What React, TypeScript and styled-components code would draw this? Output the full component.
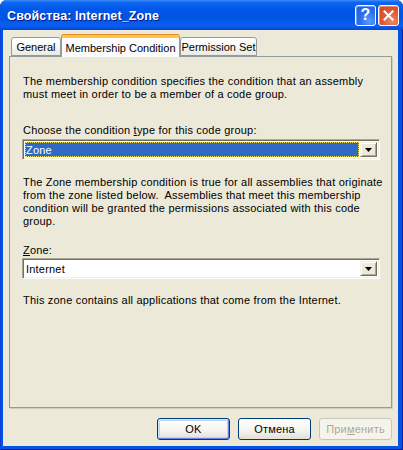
import React from "react";
import styled, { createGlobalStyle } from "styled-components";

const Global = createGlobalStyle`
  html, body { margin: 0; padding: 0; background: #ffffff; }
  body { font-family: "Liberation Sans", Arial, sans-serif; font-size: 11px; color: #000; letter-spacing: 0.2px; }
  * { box-sizing: border-box; }
`;

const Window = styled.div`
  width: 403px;
  height: 450px;
  display: flex;
  flex-direction: column;
  border-radius: 7px 7px 0 0;
  overflow: hidden;
  background: #0055e5;
  box-shadow: inset 1px 0 0 #0a3fd8, inset -1px 0 0 #001ea0, inset 0 -1px 0 #001ea0;
`;

const TitleBar = styled.div`
  height: 30px;
  flex: none;
  display: flex;
  align-items: center;
  padding: 0 4px 0 7px;
  background: linear-gradient(180deg, #3d8ef7 0%, #0f66ef 8%, #0058ea 30%, #0054e3 60%, #0a5ff1 86%, #0048d4 100%);
`;

const Title = styled.div`
  flex: 1;
  color: #fff;
  font-weight: bold;
  font-size: 12.5px;
  letter-spacing: 0.1px;
  text-shadow: 1px 1px 0 #0a1883;
  padding-top: 1px;
`;

const CaptionButton = styled.div<{ $kind: "help" | "close" }>`
  width: 21px;
  height: 21px;
  margin-left: 2px;
  border: 1px solid #fff;
  border-radius: 3px;
  display: flex;
  align-items: center;
  justify-content: center;
  color: #fff;
  font-weight: bold;
  font-size: 16px;
  background: ${(p) =>
    p.$kind === "help"
      ? "radial-gradient(circle at 70% 80%, #5a9cff 0%, #2e6ff0 45%, #1c58e0 100%)"
      : "radial-gradient(circle at 70% 80%, #f18a63 0%, #e25b34 45%, #c8431e 100%)"};
  box-shadow: inset 1px 1px 0 rgba(255, 255, 255, 0.35);
`;

const Client = styled.div`
  flex: 1;
  margin: 0 5px 4px 3px;
  background: #ece9d8;
  display: flex;
  flex-direction: column;
  padding: 5px 6px 6px 6px;
`;

const TabStrip = styled.div`
  height: 21px;
  display: flex;
  align-items: flex-end;
  padding-left: 2px;
`;

const Tab = styled.div<{ $w: number; $active?: boolean }>`
  position: relative;
  z-index: ${(p) => (p.$active ? 2 : 1)};
  width: ${(p) => p.$w}px;
  height: ${(p) => (p.$active ? 22 : 19)}px;
  margin-bottom: ${(p) => (p.$active ? -1 : 0)}px;
  border: 1px solid #919b9c;
  border-bottom: ${(p) => (p.$active ? "none" : "1px solid #919b9c")};
  border-top: ${(p) => (p.$active ? "3px solid #ffc83c" : "1px solid #919b9c")};
  border-radius: 3px 3px 0 0;
  background: ${(p) =>
    p.$active ? "#fcfcfe" : "linear-gradient(180deg, #ffffff 0%, #f7f7f3 50%, #ebeae3 100%)"};
  box-shadow: ${(p) => (p.$active ? "0 -1px 0 #e68b2c" : "none")};
  display: flex;
  align-items: center;
  justify-content: center;
  padding-top: ${(p) => (p.$active ? 0 : 1)}px;
  white-space: nowrap;
  letter-spacing: 0;
`;

const Panel = styled.div`
  height: 352px;
  border: 1px solid #919b9c;
  box-shadow: 1px 1px 0 #d0cdbd;
  background: #ece9d8;
  padding: 18px 11px 0 13px;
  display: flex;
  flex-direction: column;
`;

const Para = styled.div<{ $mt?: number }>`
  line-height: 13px;
  margin-top: ${(p) => p.$mt ?? 0}px;
  white-space: nowrap;
`;

const Combo = styled.div<{ $mt: number }>`
  margin-top: ${(p) => p.$mt}px;
  margin-left: -1px;
  height: 21px;
  display: flex;
  align-items: stretch;
  padding: 2px;
  background: #fff;
  border: 1px solid;
  border-color: #aca899 #ffffff #ffffff #aca899;
  box-shadow: inset 1px 1px 0 #716f64, inset -1px -1px 0 #f1efe2;
`;

const Field = styled.div<{ $selected?: boolean }>`
  flex: 1;
  display: flex;
  align-items: center;
  padding-left: 1px;
  margin-right: 1px;
  background: ${(p) => (p.$selected ? "#316ac5" : "transparent")};
  color: ${(p) => (p.$selected ? "#fff" : "#000")};
  outline: ${(p) => (p.$selected ? "1px dotted #f0e060" : "none")};
  outline-offset: -1px;
`;

const DropButton = styled.div`
  width: 17px;
  flex: none;
  background: #ece9d8;
  border: 1px solid;
  border-color: #f1efe2 #716f64 #716f64 #f1efe2;
  box-shadow: inset 1px 1px 0 #ffffff, inset -1px -1px 0 #aca899;
  display: flex;
  align-items: center;
  justify-content: center;
`;

const Arrow = () => (
  <svg width="7" height="4" viewBox="0 0 7 4">
    <path d="M0 0H7L3.5 4Z" fill="#000" />
  </svg>
);

const ButtonRow = styled.div`
  margin-top: 10px;
  display: flex;
  justify-content: flex-end;
  gap: 8px;
`;

const Button = styled.div<{ $default?: boolean; $disabled?: boolean }>`
  width: 73px;
  height: 22px;
  border-radius: 3px;
  border: 1px solid ${(p) => (p.$disabled ? "#c9c7ba" : "#003c74")};
  background: ${(p) =>
    p.$disabled ? "#f5f4ea" : "linear-gradient(180deg, #ffffff 0%, #f4f3ee 60%, #e3e0d4 100%)"};
  color: ${(p) => (p.$disabled ? "#aca899" : "#000")};
  box-shadow: ${(p) =>
    p.$default ? "inset 1px 1px 0 #cee7ff, inset -1px -1px 0 #6982ee, inset 0 0 0 2px #bcd4f6" : "none"};
  display: flex;
  align-items: center;
  justify-content: center;
`;

export default function App() {
  return (
    <>
      <Global />
      <Window>
        <TitleBar>
          <Title>Свойства: Internet_Zone</Title>
          <CaptionButton $kind="help">?</CaptionButton>
          <CaptionButton $kind="close">
            <svg width="11" height="11" viewBox="0 0 11 11">
              <path d="M1.5 1.5L9.5 9.5M9.5 1.5L1.5 9.5" stroke="#fff" strokeWidth="2" strokeLinecap="square" />
            </svg>
          </CaptionButton>
        </TitleBar>
        <Client>
          <TabStrip>
            <Tab $w={50}>General</Tab>
            <Tab $w={119} $active>
              Membership Condition
            </Tab>
            <Tab $w={77}>Permission Set</Tab>
          </TabStrip>
          <Panel>
            <Para>
              The membership condition specifies the condition that an assembly
              <br />
              must meet in order to be a member of a code group.
            </Para>
            <Para $mt={23}>
              Choose the condition <u>t</u>ype for this code group:
            </Para>
            <Combo $mt={2}>
              <Field $selected>Zone</Field>
              <DropButton>
                <Arrow />
              </DropButton>
            </Combo>
            <Para $mt={16}>
              The Zone membership condition is true for all assemblies that originate
              <br />
              from the zone listed below.{"\u00a0 "}Assemblies that meet this membership
              <br />
              condition will be granted the permissions associated with this code
              <br />
              group.
            </Para>
            <Para $mt={16}>
              <u>Z</u>one:
            </Para>
            <Combo $mt={1}>
              <Field>Internet</Field>
              <DropButton>
                <Arrow />
              </DropButton>
            </Combo>
            <Para $mt={15}>This zone contains all applications that come from the Internet.</Para>
          </Panel>
          <ButtonRow>
            <Button $default>OK</Button>
            <Button>Отмена</Button>
            <Button $disabled>
              При<u>м</u>енить
            </Button>
          </ButtonRow>
        </Client>
      </Window>
    </>
  );
}
